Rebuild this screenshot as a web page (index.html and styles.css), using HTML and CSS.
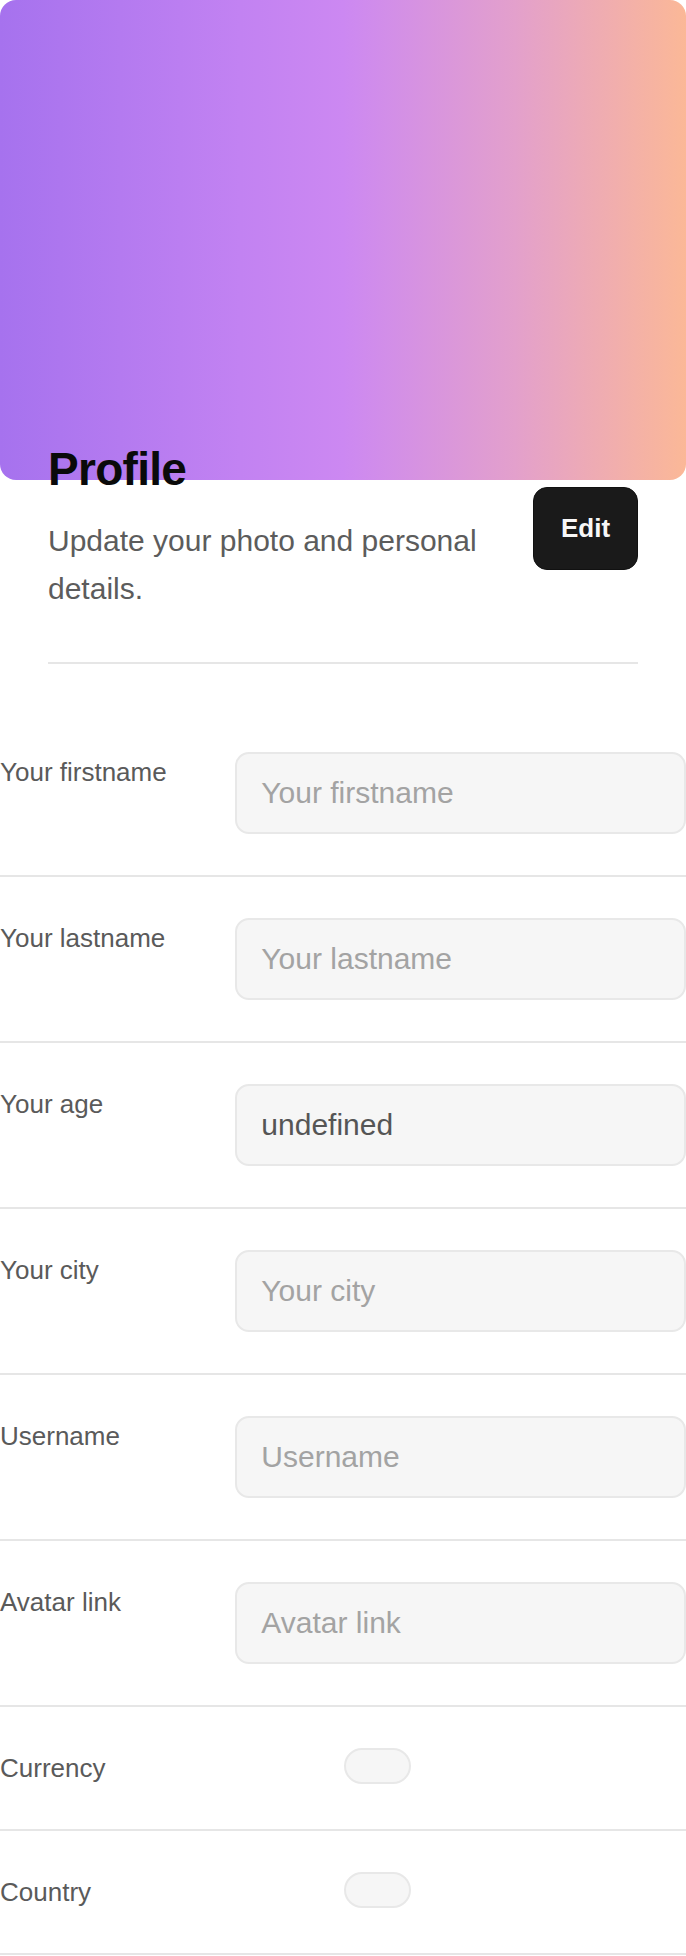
FILE: index.html
```html
<!DOCTYPE html>
<html lang="en">
<head>
<meta charset="utf-8">
<title>Profile</title>
<link rel="stylesheet" href="styles.css">
</head>
<body>
<div class="banner"></div>
<header class="head">
  <div class="head-row">
    <div class="head-text">
      <h1 class="title">Profile</h1>
      <p class="subtitle">Update your photo and personal details.</p>
    </div>
    <button class="edit" type="button">Edit</button>
  </div>
  <div class="sep"></div>
</header>
<form class="form">
  <div class="row">
    <label class="label">Your firstname</label>
    <input class="field" type="text" placeholder="Your firstname">
  </div>
  <div class="row">
    <label class="label">Your lastname</label>
    <input class="field" type="text" placeholder="Your lastname">
  </div>
  <div class="row">
    <label class="label">Your age</label>
    <input class="field" type="text" value="undefined">
  </div>
  <div class="row">
    <label class="label">Your city</label>
    <input class="field" type="text" placeholder="Your city">
  </div>
  <div class="row">
    <label class="label">Username</label>
    <input class="field" type="text" placeholder="Username">
  </div>
  <div class="row">
    <label class="label">Avatar link</label>
    <input class="field" type="text" placeholder="Avatar link">
  </div>
  <div class="row row-select">
    <label class="label">Currency</label>
    <div><span class="select"></span></div>
  </div>
  <div class="row row-select">
    <label class="label">Country</label>
    <div><span class="select"></span></div>
  </div>
</form>
</body>
</html>
```

FILE: styles.css
```css
* { box-sizing: border-box; }
html, body { margin: 0; padding: 0; background: #ffffff; }
body {
  font-family: "Liberation Sans", Arial, sans-serif;
  color: #111;
}
.banner {
  height: 480px;
  border-radius: 16px;
  background: linear-gradient(90deg, #a672ee 0%, #c282f2 35%, #cc88f2 50%, #e3a0cc 75%, #fbb897 100%);
}
.head {
  margin-top: -37px;
  padding: 0 48px;
}
.head-row {
  display: flex;
  align-items: center;
  justify-content: space-between;
  gap: 24px;
}
.head-text { flex: 1; min-width: 0; }
.title {
  margin: 0 0 21px;
  font-size: 46px;
  line-height: 53px;
  font-weight: 700;
  letter-spacing: -0.7px;
  color: #0a0a0a;
}
.subtitle {
  margin: 0;
  font-size: 30px;
  line-height: 48px;
  color: #5c5c5c;
}
.edit {
  flex: none;
  height: 83px;
  width: 105px;
  padding: 0;
  border: 1px solid #111;
  border-radius: 14px;
  background: #1a1a1a;
  color: #f7f7f7;
  font-family: "Liberation Sans", Arial, sans-serif;
  font-weight: 700;
  font-size: 26px;
}
.sep {
  margin-top: 49px;
  height: 2px;
  background: #e6e6e6;
}
.form { margin-top: 47px; }
.row {
  display: grid;
  grid-template-columns: 1fr 2fr;
  column-gap: 10px;
  align-items: start;
  padding: 41px 0;
  border-bottom: 2px solid #e6e6e6;
}
.row-select {
  grid-template-columns: 1fr 1fr;
  column-gap: 0;
}
.label {
  font-size: 26px;
  line-height: 40px;
  color: #5a5a5a;
}
.field {
  width: 100%;
  height: 82px;
  padding: 0 24px;
  border: 2px solid #e8e8e8;
  border-radius: 14px;
  background: #f6f6f6;
  font-family: "Liberation Sans", Arial, sans-serif;
  font-size: 30px;
  color: #555555;
  outline: none;
}
.field::placeholder { color: #a3a3a3; opacity: 1; }
.select {
  display: block;
  margin-left: 1px;
  width: 67px;
  height: 36px;
  border: 2px solid #e8e8e8;
  border-radius: 18px;
  background: #f6f6f6;
}
```
